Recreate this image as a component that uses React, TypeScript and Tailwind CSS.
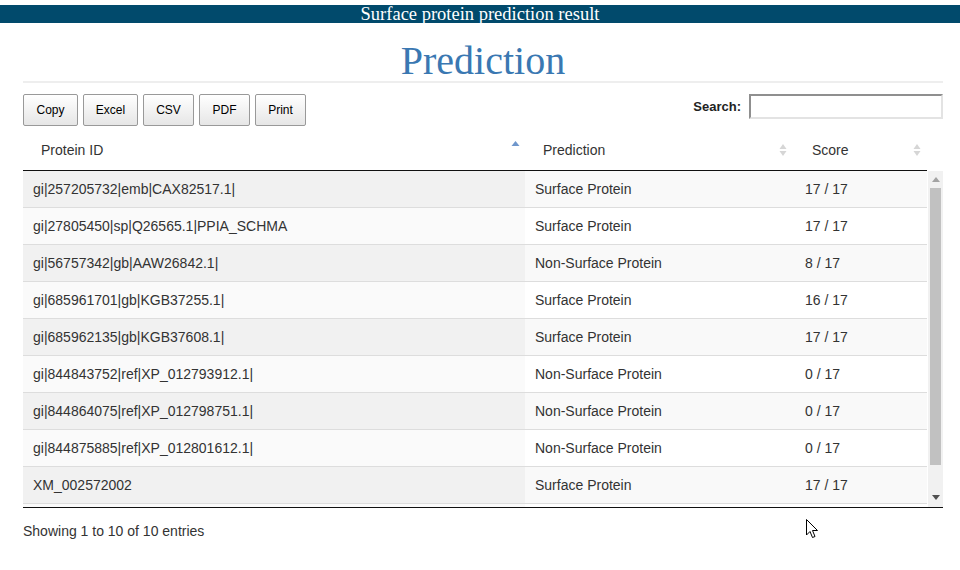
import React from "react";

const rows = [
  ["gi|257205732|emb|CAX82517.1|", "Surface Protein", "17 / 17"],
  ["gi|27805450|sp|Q26565.1|PPIA_SCHMA", "Surface Protein", "17 / 17"],
  ["gi|56757342|gb|AAW26842.1|", "Non-Surface Protein", "8 / 17"],
  ["gi|685961701|gb|KGB37255.1|", "Surface Protein", "16 / 17"],
  ["gi|685962135|gb|KGB37608.1|", "Surface Protein", "17 / 17"],
  ["gi|844843752|ref|XP_012793912.1|", "Non-Surface Protein", "0 / 17"],
  ["gi|844864075|ref|XP_012798751.1|", "Non-Surface Protein", "0 / 17"],
  ["gi|844875885|ref|XP_012801612.1|", "Non-Surface Protein", "0 / 17"],
  ["XM_002572002", "Surface Protein", "17 / 17"],
  ["XM_002577231", "Surface Protein", "17 / 17"],
];

const buttons = [
  { label: "Copy", w: "w-[55px]" },
  { label: "Excel", w: "w-[55px]" },
  { label: "CSV", w: "w-[51px]" },
  { label: "PDF", w: "w-[51px]" },
  { label: "Print", w: "w-[51px]" },
];

function SortBoth() {
  return (
    <svg width="8" height="14" viewBox="0 0 8 14" className="shrink-0">
      <path d="M4 1 L7.5 6 H0.5 Z" fill="#d6d6d6" />
      <path d="M4 13 L7.5 8 H0.5 Z" fill="#d6d6d6" />
    </svg>
  );
}

function SortAsc() {
  return (
    <svg width="9" height="14" viewBox="0 0 9 14" className="shrink-0">
      <path d="M4.5 1 L8.5 6 H0.5 Z" fill="#6f97cc" />
    </svg>
  );
}

export default function App() {
  return (
    <div className="relative w-[960px] h-[570px] bg-white text-[#333] overflow-hidden" style={{ fontFamily: '"Liberation Sans", Arial, sans-serif' }}>
      {/* Top banner */}
      <div className="mt-[5px] h-[18px] bg-[#014a6c] flex items-center justify-center">
        <span className="text-white text-[18.5px] leading-[18px]" style={{ fontFamily: '"Liberation Serif", "Times New Roman", serif' }}>
          Surface protein prediction result
        </span>
      </div>

      <div className="mx-[23px] w-[920px]">
        {/* Heading */}
        <h1 className="mt-[19px] text-center text-[40px] leading-[38px] text-[#3a78b2]" style={{ fontFamily: '"Liberation Serif", "Times New Roman", serif' }}>
          Prediction
        </h1>
        <div className="mt-[1px] h-[2px] bg-[#eeeeee]" />

        {/* Toolbar */}
        <div className="mt-[11px] flex items-start justify-between">
          <div className="flex gap-[5px]">
            {buttons.map((b) => (
              <button
                key={b.label}
                className={`${b.w} h-[32px] rounded-[2px] border border-[#999] bg-gradient-to-b from-white to-[#e6e6e6] text-[12px] text-black`}
              >
                {b.label}
              </button>
            ))}
          </div>
          <div className="flex items-center gap-[8px]">
            <span className="text-[13px] font-bold text-[#222] pt-[1px]">Search:</span>
            <input className="w-[194px] h-[25px] border-2 border-t-[#8f8f8f] border-l-[#8f8f8f] border-r-[#e3e3e3] border-b-[#e3e3e3] bg-white outline-none" />
          </div>
        </div>

        {/* Table header */}
        <div className="mt-[4px] flex w-[904px] h-[41px] border-b border-[#111] text-[14px]">
          <div className="w-[502px] flex items-center justify-between pl-[18px] pr-[5px]">
            <span>Protein ID</span>
            <div className="-mt-[6px]"><SortAsc /></div>
          </div>
          <div className="w-[270px] flex items-center justify-between pl-[18px] pr-[8px]">
            <span>Prediction</span>
            <SortBoth />
          </div>
          <div className="w-[132px] flex items-center justify-between pl-[17px] pr-[6px]">
            <span>Score</span>
            <SortBoth />
          </div>
        </div>

        {/* Table body with scrollbar */}
        <div className="flex h-[337px] border-b border-[#111] overflow-hidden">
          <div className="w-[904px] h-[337px] overflow-hidden">
            {rows.map((r, i) => {
              const odd = i % 2 === 0;
              return (
                <div key={i} className="flex h-[37px] text-[14px] border-b border-[#ddd]">
                  <div className={`w-[502px] flex items-center pl-[10px] ${odd ? "bg-[#f1f1f1]" : "bg-[#fafafa]"}`}>{r[0]}</div>
                  <div className={`w-[270px] flex items-center pl-[10px] ${odd ? "bg-[#f9f9f9]" : "bg-white"}`}>{r[1]}</div>
                  <div className={`w-[132px] flex items-center pl-[10px] ${odd ? "bg-[#f9f9f9]" : "bg-white"}`}>{r[2]}</div>
                </div>
              );
            })}
          </div>
          {/* scrollbar */}
          <div className="ml-[1px] w-[15px] bg-[#f1f1f1] flex flex-col items-center">
            <div className="h-[17px] flex items-center justify-center">
              <svg width="8" height="5" viewBox="0 0 8 5"><path d="M4 0 L8 5 H0 Z" fill="#a3a3a3" /></svg>
            </div>
            <div className="w-[11px] h-[277px] bg-[#c1c1c1]" />
            <div className="flex-1" />
            <div className="h-[20px] flex items-center justify-center">
              <svg width="8" height="5" viewBox="0 0 8 5"><path d="M0 0 H8 L4 5 Z" fill="#505050" /></svg>
            </div>
          </div>
        </div>

        {/* Footer info */}
        <div className="mt-[13px] text-[14px]">Showing 1 to 10 of 10 entries</div>
      </div>

      {/* mouse cursor */}
      <svg className="absolute left-[806px] top-[519px]" width="13" height="20" viewBox="0 0 13 20">
        <path d="M0.5 0.5 L0.5 16 L4 12.5 L6.5 18.5 L9 17.5 L6.5 11.5 L11.5 11.5 Z" fill="white" stroke="black" strokeWidth="1" strokeLinejoin="round" />
      </svg>
    </div>
  );
}
